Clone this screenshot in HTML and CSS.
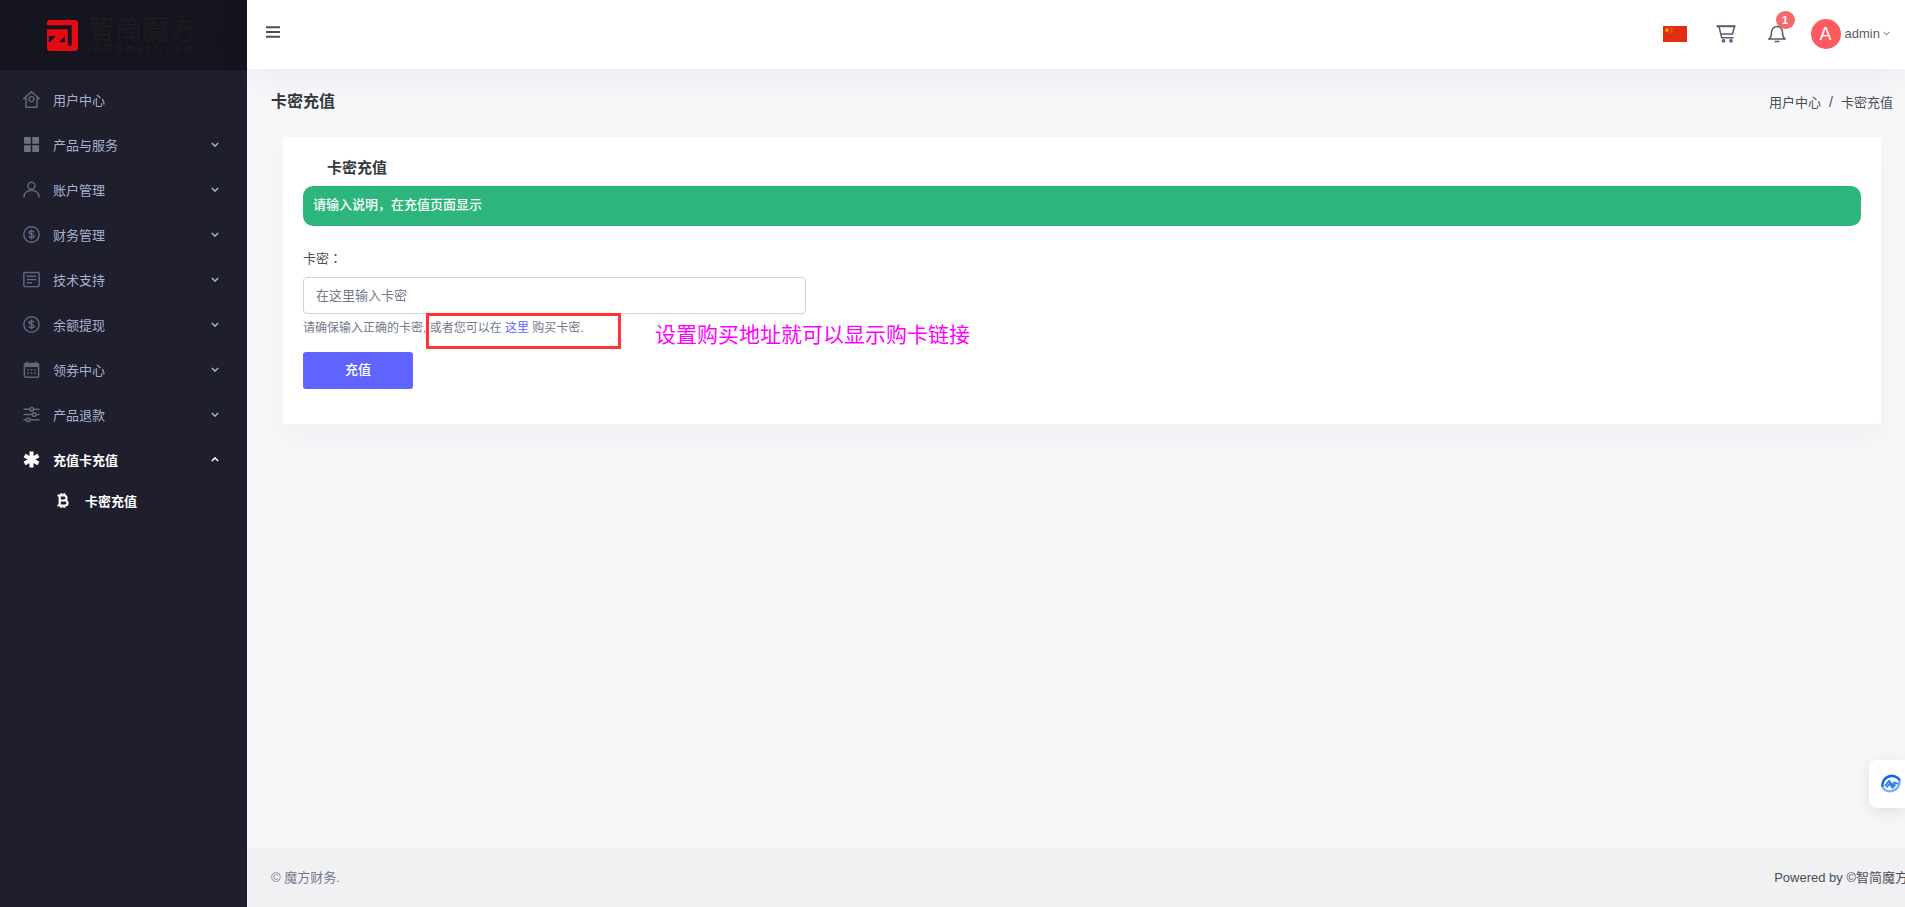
FILE: index.html
```html
<!DOCTYPE html>
<html lang="zh-CN">
<head>
<meta charset="utf-8">
<title>卡密充值</title>
<link rel="stylesheet" href="styles.css">
</head>
<body>
<div class="app">
  <aside class="sidebar">
    <div class="brand">
      <svg class="brand-mark" viewBox="0 0 32 32"><rect width="32" height="32" rx="3" fill="#e50914"/><path d="M0 5.500H25.500V26.500H21.500V9.500H0Z" fill="#14151f"/><path d="M2 16.500H9L3 23H2ZM18.500 16.500V23H12.500Z" fill="#14151f"/></svg>
      <div class="brand-text">
        <div class="brand-name">智简魔方</div>
        <div class="brand-url">IDCSmart.com</div>
      </div>
    </div>
    <nav class="menu">
      <a class="menu-item"><svg class="ico" viewBox="0 0 16 16"><path d="M8 .8 .8 7H2.800v8.200h10.400V7h2Z M8 5.200a2.400 2.400 0 1 0 .01 0"/></svg><span class="menu-label">用户中心</span></a>
      <a class="menu-item"><svg class="ico solid" viewBox="0 0 16 16"><path d="M1 1h6.300v6.300H1zM8.700 1H15v6.300H8.700zM1 8.700h6.300V15H1zM8.700 8.700H15V15H8.700z"/></svg><span class="menu-label">产品与服务</span><svg class="chev" viewBox="0 0 10 6"><path d="M1 1l4 4 4-4"/></svg></a>
      <a class="menu-item"><svg class="ico" viewBox="0 0 16 16"><circle cx="8" cy="4.500" r="3.300"/><path d="M1 15.500v-1a6 5 0 0 1 14 0v1"/></svg><span class="menu-label">账户管理</span><svg class="chev" viewBox="0 0 10 6"><path d="M1 1l4 4 4-4"/></svg></a>
      <a class="menu-item"><svg class="ico" viewBox="0 0 16 16"><circle cx="8" cy="8" r="7.200"/><path d="M10.300 5.800C9.800 4.600 5.600 4.300 5.600 6.200c0 2.200 4.900 1.200 4.900 3.500 0 2-4.500 1.800-5-.2M8 3.300v9.400"/></svg><span class="menu-label">财务管理</span><svg class="chev" viewBox="0 0 10 6"><path d="M1 1l4 4 4-4"/></svg></a>
      <a class="menu-item"><svg class="ico" viewBox="0 0 16 16"><rect x=".8" y="1.300" width="14.400" height="13.400" rx="1"/><path d="M3.500 5h9M3.500 8h9M3.500 11h5"/></svg><span class="menu-label">技术支持</span><svg class="chev" viewBox="0 0 10 6"><path d="M1 1l4 4 4-4"/></svg></a>
      <a class="menu-item"><svg class="ico" viewBox="0 0 16 16"><circle cx="8" cy="8" r="7.200"/><path d="M10.300 5.800C9.800 4.600 5.600 4.300 5.600 6.200c0 2.200 4.900 1.200 4.900 3.500 0 2-4.500 1.800-5-.2M8 3.300v9.400"/></svg><span class="menu-label">余额提现</span><svg class="chev" viewBox="0 0 10 6"><path d="M1 1l4 4 4-4"/></svg></a>
      <a class="menu-item"><svg class="ico" viewBox="0 0 16 16"><rect x="1.300" y="2.300" width="13.400" height="13" rx="1"/><path class="cal-band" d="M1.300 4.200h13.400"/><path d="M4 .5v3M12 .5v3M4 8.500h1.500M7.300 8.500h1.500M10.500 8.500H12M4 11.500h1.500M7.300 11.500h1.500M10.500 11.500H12"/></svg><span class="menu-label">领券中心</span><svg class="chev" viewBox="0 0 10 6"><path d="M1 1l4 4 4-4"/></svg></a>
      <a class="menu-item"><svg class="ico" viewBox="0 0 16 16"><path d="M.5 3h6M10 3h5.500M.5 8h8M12.500 8h3M.5 13h2.500M7 13h8.500"/><circle cx="8.200" cy="3" r="1.700"/><circle cx="10.500" cy="8" r="1.700"/><circle cx="5" cy="13" r="1.700"/></svg><span class="menu-label">产品退款</span><svg class="chev" viewBox="0 0 10 6"><path d="M1 1l4 4 4-4"/></svg></a>
      <a class="menu-item active"><svg class="ico star" viewBox="0 0 16 16"><path d="M8 .5v15M1.500 4.200l13 7.600M14.500 4.200l-13 7.600"/></svg><span class="menu-label">充值卡充值</span><svg class="chev" viewBox="0 0 10 6"><path d="M1 5l4-4 4 4"/></svg></a>
      <a class="sub-item"><svg class="btc" viewBox="0 0 12 15"><path d="M.5 2.500h6.500a2.400 2.400 0 0 1 0 5H2.500h5.500a2.500 2.500 0 0 1 0 5H.5M2.700 2.500v10M4.300.2v2.300M7.300.2v2.300M4.300 12.500v2.300M7.300 12.500v2.300"/></svg><span>卡密充值</span></a>
    </nav>
  </aside>
  <div class="main">
    <header class="topbar">
      <svg class="burger" viewBox="0 0 14 12"><path d="M0 1.200h14M0 6h14M0 10.800h14"/></svg>
      <div class="top-actions">
        <svg class="flag" viewBox="0 0 24 16"><rect width="24" height="16" fill="#e12d12"/><circle cx="4" cy="4" r="1.800" fill="#f5b50a"/><circle cx="7.500" cy="1.800" r=".7" fill="#f08a0a"/><circle cx="8.800" cy="3.400" r=".7" fill="#f08a0a"/><circle cx="8.800" cy="5.400" r=".7" fill="#f08a0a"/><circle cx="7.500" cy="7" r=".7" fill="#f08a0a"/></svg>
        <svg class="cart" viewBox="0 0 20 18"><path class="cart-top" d="M.5 1.200h19"/><path d="M18.500 1.500 16.500 9H5.200M3 1.500l2.700 11.300h11.800"/><circle cx="7.500" cy="15.800" r="1.100"/><circle cx="15" cy="15.800" r="1.100"/></svg>
        <span class="bell-wrap">
          <svg class="bell" viewBox="0 0 18 18"><path d="M1 14h16c-2-1.500-2.500-3-2.500-6.500C14.500 4 12 1.500 9 1.500S3.500 4 3.500 7.500C3.500 11 3 12.500 1 14ZM6.500 16.500h5"/></svg>
          <span class="badge">1</span>
        </span>
        <span class="user"><span class="avatar">A</span><span class="uname">admin</span><svg class="user-chev" viewBox="0 0 10 6"><path d="M1 1l4 4 4-4"/></svg></span>
      </div>
    </header>
    <main class="content">
      <div class="page-head">
        <h1 class="page-title">卡密充值</h1>
        <div class="crumbs"><span>用户中心</span><i class="crumb-sep">/</i><span>卡密充值</span></div>
      </div>
      <section class="card">
        <h2 class="card-title">卡密充值</h2>
        <div class="alert">请输入说明，在充值页面显示</div>
        <form class="form">
          <label class="field-label" lang="zh-TW">卡密：</label>
          <input class="field-input" placeholder="在这里输入卡密">
          <p class="help">请确保输入正确的卡密, 或者您可以在 <a class="link">这里</a> 购买卡密.</p>
          <button class="submit" type="button"><span class="submit-text">充值</span></button>
        </form>
        <div class="mark-box"></div>
        <div class="mark-note">设置购买地址就可以显示购卡链接</div>
      </section>
    </main>
    <footer class="footer"><span>© 魔方财务.</span><span class="powered">Powered by ©智简魔方</span></footer>
  </div>
</div>
<div class="float-help"><svg viewBox="0 0 24 24"><path d="M3.500 15A9.500 9.500 0 0 1 21 8.500" fill="none" stroke="#1668e8" stroke-width="2.600"/><path d="M20.500 9A9.500 9.500 0 0 1 3.500 15.500" fill="none" stroke="#4f96f5" stroke-width="2.600" opacity=".75"/><path d="M6 14l4-5 3.500 4 2-2.500L19 12M7.500 15.500l3-3.500 3 3.500 3-3" fill="none" stroke="#2f7ff0" stroke-width="1.900"/></svg></div>
</body>
</html>
```
FILE: styles.css
```css
* { box-sizing: border-box; }
html, body { margin: 0; height: 100%; overflow: hidden; }
body { font-family: "Liberation Sans", "Noto Sans CJK SC", sans-serif; font-size: 13px; color: #495057; background: #f7f7fa; }
.app { display: flex; height: 907px; }
.sidebar { width: 247px; flex: none; background: #1e1e2d; }
.brand { height: 70px; background: #14151f; display: flex; align-items: center; padding-left: 47px; gap: 10px; }
.brand-mark { width: 31px; height: 31px; flex: none; }
.brand-text { display: flex; flex-direction: column; color: #261b1b; }
.brand-name { font-size: 27px; font-weight: 300; line-height: 24px; height: 24px; }
.brand-url { font-size: 10px; font-weight: 700; letter-spacing: 3.300px; line-height: 9px; font-style: italic; margin-top: 2px; }
.menu { display: flex; flex-direction: column; padding-top: 7px; }
.menu-item { height: 45px; display: flex; align-items: center; padding: 0 28px 0 23px; color: #a6b0cf; }
.menu-label { flex: 1; margin-left: 13px; line-height: 1; padding-top: 2px; }
.ico { width: 17px; height: 17px; fill: none; stroke: #5f667f; stroke-width: 1.400; flex: none; }
.ico.solid { fill: #6a7187; stroke: none; }
.ico.star { stroke: #fff; stroke-width: 3.800; }
.cal-band { stroke-width: 3; }
.chev { width: 8px; height: 5px; fill: none; stroke: #a6b0cf; stroke-width: 1.800; flex: none; }
.active { color: #fff; font-weight: 700; }
.active .chev { stroke: #fff; }
.sub-item { height: 37px; display: flex; align-items: center; padding-left: 57px; color: #fff; font-weight: 700; gap: 16px; }
.btc { width: 12px; height: 15px; fill: none; stroke: #fff; stroke-width: 2.200; flex: none; }
.main { flex: 1; min-width: 0; display: flex; flex-direction: column; }
.topbar { height: 69px; background: #fff; display: flex; align-items: center; justify-content: space-between; padding: 0 15px 0 19px; box-shadow: 0 4px 40px rgba(18, 38, 63, .06); position: relative; }
.burger { width: 14px; height: 12px; fill: none; stroke: #495057; stroke-width: 2; margin-top: -6px; }
.top-actions { display: flex; align-items: center; margin-top: -2px; }
.flag { width: 24px; height: 16px; margin-right: 1px; }
.cart { width: 20px; height: 18px; margin-left: 28px; fill: none; stroke: #555b6d; stroke-width: 1.500; }
.cart-top { stroke-width: 2; }
.bell-wrap { position: relative; margin-left: 32px; display: flex; }
.bell { width: 18px; height: 18px; fill: none; stroke: #555b6d; stroke-width: 1.500; }
.badge { position: absolute; top: -14px; left: 8px; width: 19px; height: 18px; border-radius: 9px; background: #f46a6a; color: #fff; font: 700 11px/18px "Liberation Sans", sans-serif; text-align: center; }
.user { display: flex; align-items: center; margin-left: 25px; }
.avatar { width: 30px; height: 30px; border-radius: 50%; background: #ff5a5f; color: #fff; font: 18px/30px "Liberation Sans", sans-serif; text-align: center; }
.uname { color: #555b6d; margin-left: 4px; }
.user-chev { width: 7px; height: 5px; fill: none; stroke: #495057; stroke-width: 1.300; margin-left: 3px; }
.content { flex: 1; padding: 21px 12px 0 24px; min-height: 0; }
.page-head { display: flex; justify-content: space-between; align-items: center; height: 24px; }
.page-title { margin: 0; font-size: 16px; font-weight: 700; color: #343a40; line-height: 24px; }
.crumbs { display: flex; align-items: baseline; gap: 8px; color: #495057; margin-top: -2px; }
.crumb-sep { font-style: normal; font-size: 14px; }
.card { position: relative; margin: 23px 12px 0; height: 287px; background: #fff; border-radius: 4px; padding: 21px 20px 0; box-shadow: 0 12px 24px rgba(18, 38, 63, .03); }
.card-title { margin: 0 0 0 24px; font-size: 15px; font-weight: 700; color: #343a40; line-height: 20px; }
.alert { margin-top: 8px; height: 40px; border-radius: 10px; background: #2cb67d; color: #fff; padding: 0 10px; line-height: 37px; font-weight: 500; }
.form { display: flex; flex-direction: column; align-items: flex-start; margin-top: 23px; }
.field-label { line-height: 20px; color: #495057; font-family: "Liberation Sans", "Noto Sans CJK TC", sans-serif; }
.field-input { margin-top: 8px; width: 503px; height: 37px; border: 1px solid #ced4da; border-radius: 4px; padding: 0 12px; font: inherit; color: #495057; background: #fff; }
.field-input::placeholder { color: #74788d; opacity: 1; }
.help { margin: 4px 0 0; font-size: 12px; line-height: 20px; color: #74788d; }
.link { color: #6064ff; }
.submit { margin-top: 14px; width: 110px; height: 37px; border: 0; border-radius: 3px; background: #6064ff; color: #fff; font: 13px "Liberation Sans", "Noto Sans CJK SC", sans-serif; padding: 0 0 4px; }
.submit-text { font-weight: 500; }
.mark-box { position: absolute; left: 143px; top: 176px; width: 195px; height: 36px; border: 3px solid #f33; }
.mark-note { position: absolute; left: 372px; top: 183px; font-size: 21px; line-height: 30px; color: #f0f; white-space: nowrap; }
.footer { height: 59px; background: #f1f1f4; display: flex; justify-content: space-between; align-items: center; padding: 0 0 2px 24px; color: #74788d; overflow: hidden; }
.powered { margin-right: -3px; color: #495057; }
.float-help { position: fixed; right: 0; top: 760px; width: 36px; height: 48px; background: #fff; border-radius: 8px 0 0 8px; box-shadow: 0 4px 16px rgba(0, 0, 0, .1); display: flex; align-items: center; padding-left: 10px; }
.float-help svg { width: 24px; height: 24px; flex: none; }
```
